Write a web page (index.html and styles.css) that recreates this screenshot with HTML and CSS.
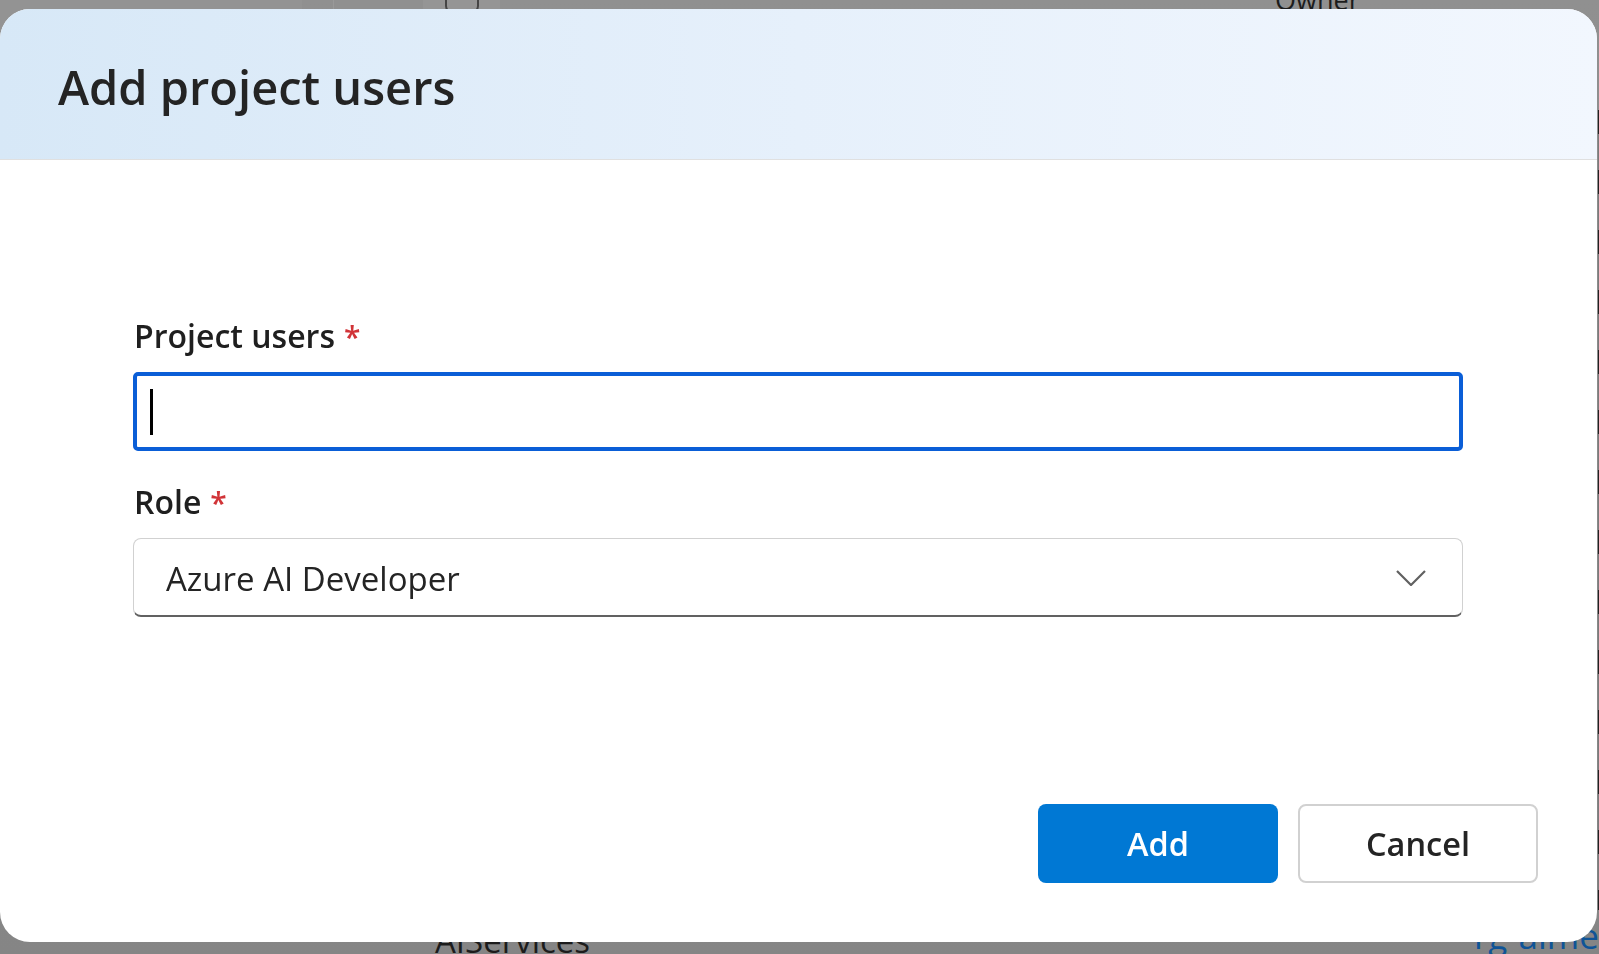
FILE: index.html
```html
<!DOCTYPE html>
<html>
<head>
<meta charset="utf-8">
<link rel="stylesheet" href="styles.css">
</head>
<body>
<div class="page">
  <div class="band band-a"></div>
  <div class="band band-b"></div>
  <div class="band band-c"></div>
  <div class="check-box"></div>
  <div class="page-text owner">Owner</div>
  <div class="page-text services">AIServices</div>
  <div class="page-text rg-link">rg-aimedev</div>
  <div class="edge-line"></div>
</div>

<div class="overlay">
  <div class="dialog" role="dialog" aria-labelledby="dlg-title">
    <header class="dialog-header">
      <h1 id="dlg-title" class="dialog-title">Add project users</h1>
    </header>

    <div class="dialog-body">
      <div class="field">
        <div class="field-label">Project users<span class="req">*</span></div>
        <div class="text-input"><span class="caret"></span></div>
      </div>

      <div class="field field-role">
        <div class="field-label">Role<span class="req">*</span></div>
        <div class="select">
          <span class="select-value">Azure AI Developer</span>
          <svg class="chevron" width="30" height="16" viewBox="0 0 30 16" aria-hidden="true">
            <polyline points="1,1 15,15 29,1" fill="none" stroke="#616161" stroke-width="2.2" stroke-linejoin="miter"/>
          </svg>
        </div>
      </div>
    </div>

    <footer class="dialog-footer">
      <button class="btn btn-primary">Add</button>
      <button class="btn btn-secondary">Cancel</button>
    </footer>
  </div>
</div>
</body>
</html>
```
FILE: styles.css
```css
html, body {
  margin: 0;
  padding: 0;
}

body {
  width: 1599px;
  height: 954px;
  overflow: hidden;
  background: linear-gradient(180deg, #909090 0%, #858585 100%);
  font-family: "Open Sans", "Noto Sans", sans-serif;
  color: #242424;
}

/* ---------- page behind the modal ---------- */
.page {
  position: relative;
  width: 1599px;
  height: 954px;
}

.band {
  position: absolute;
  top: 0;
  height: 40px;
}
.band-a { left: 0; width: 302px; background: #939393; }
.band-b { left: 333px; width: 90px; background: #909090; border-left: 1px solid #999; }
.band-c { left: 423px; width: 77px; background: #959595; }

.check-box {
  position: absolute;
  left: 445px;
  top: -20px;
  width: 30px;
  height: 30px;
  border: 2px solid #454545;
  border-radius: 8px;
}

.page-text {
  position: absolute;
  line-height: 40px;
  white-space: nowrap;
  color: #1c1c1c;
}
.owner { left: 1275px; top: -20px; font-size: 27px; }
.services { left: 435px; top: 921px; font-size: 33px; }
.rg-link { left: 1474px; top: 916px; font-size: 35px; color: #0f5497; }

.edge-line {
  position: absolute;
  right: 0;
  top: 110px;
  width: 1px;
  height: 800px;
  background: repeating-linear-gradient(180deg, #222 0 24px, #7a7a7a 24px 60px);
}

/* ---------- modal ---------- */
.overlay {
  position: fixed;
  inset: 0;
  padding-top: 9px;
}

.dialog {
  width: 1597px;
  height: 933px;
  background: #ffffff;
  border-radius: 30px;
  overflow: hidden;
  display: flex;
  flex-direction: column;
}

.dialog-header {
  height: 151px;
  box-sizing: border-box;
  padding: 46px 58px 0;
  background: linear-gradient(90deg, #d7e8f7 0%, #e6f0fb 50%, #f2f7fe 100%);
  border-bottom: 1px solid #e0e0e0;
}

.dialog-title {
  margin: 0;
  font-size: 47px;
  line-height: 64px;
  font-weight: 600;
  color: #242424;
}

.dialog-body {
  padding: 156px 134px 0 133px;
}

.field-label {
  font-size: 32px;
  line-height: 40px;
  font-weight: 600;
  color: #1f1f1f;
  margin-bottom: 15px;
  padding-left: 1px;
}

.req {
  color: #d13438;
  padding-left: 9px;
  font-size: 30px;
}

.text-input {
  height: 79px;
  box-sizing: border-box;
  border: 4px solid #0a5ed7;
  border-radius: 5px;
  padding-left: 13px;
  display: flex;
  align-items: center;
}

.caret {
  width: 3px;
  height: 46px;
  background: #000;
}

.field-role {
  margin-top: 31px;
}

.select {
  margin-top: 5px;
  height: 79px;
  box-sizing: border-box;
  border: 1px solid #d1d1d1;
  border-bottom: 2px solid #616161;
  border-radius: 8px;
  padding: 2px 36px 0 32px;
  display: flex;
  align-items: center;
  justify-content: space-between;
}

.select-value {
  font-size: 33px;
  color: #242424;
}

.chevron {
  display: block;
}

.dialog-footer {
  margin-top: auto;
  display: flex;
  justify-content: flex-end;
  gap: 20px;
  padding: 0 59px 59px 0;
}

.btn {
  width: 240px;
  height: 79px;
  box-sizing: border-box;
  border-radius: 8px;
  font-family: "Open Sans", "Noto Sans", sans-serif;
  font-size: 32.5px;
  font-weight: 600;
  padding: 0;
  cursor: pointer;
}

.btn-primary {
  background: #0078d4;
  color: #ffffff;
  border: none;
}

.btn-secondary {
  background: #ffffff;
  color: #242424;
  border: 2px solid #d1d1d1;
}
```
